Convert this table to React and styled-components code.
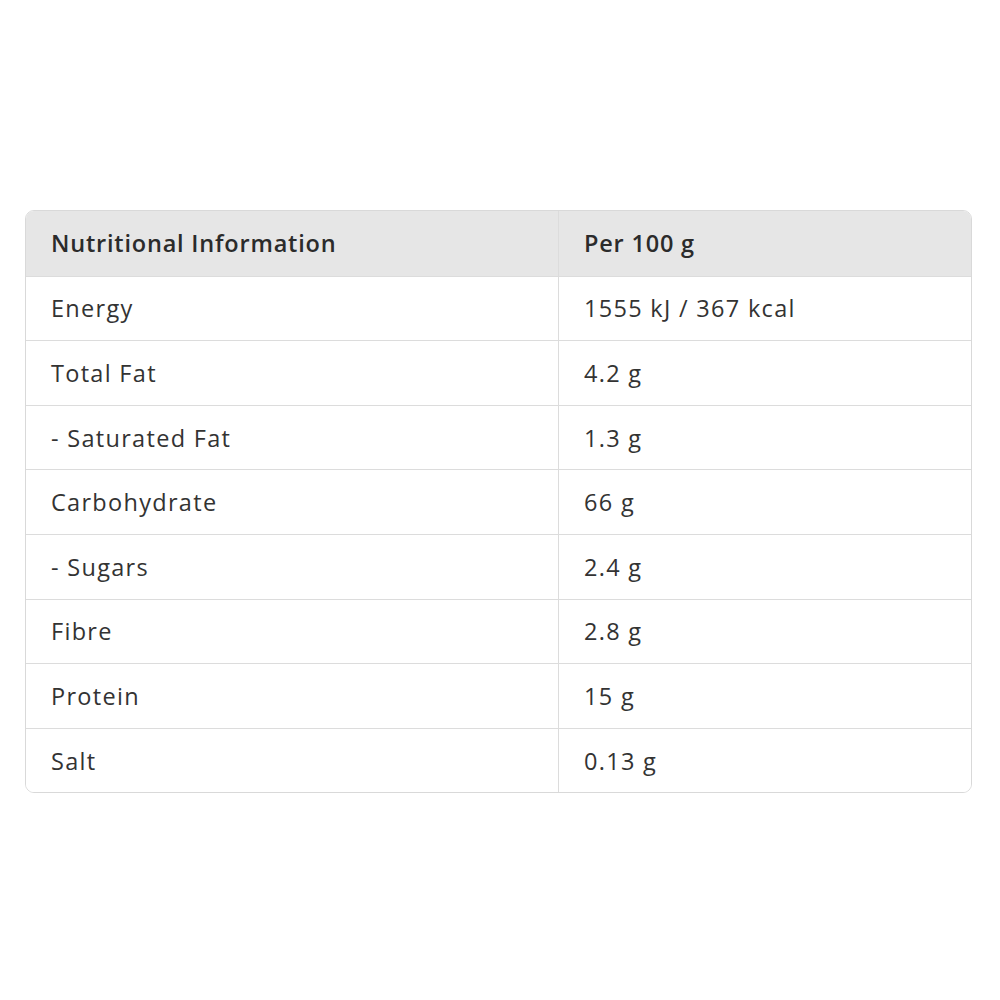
import React from "react";
import styled, { createGlobalStyle } from "styled-components";

const Global = createGlobalStyle`
  html, body { margin: 0; padding: 0; background: #ffffff; }
  body { font-family: "Open Sans", "Noto Sans", sans-serif; }
`;

const Page = styled.div`
  width: 1000px;
  height: 1000px;
  padding: 210px 28px 0 25px;
  box-sizing: border-box;
`;

const Table = styled.div`
  display: grid;
  grid-template-columns: 532px 1fr;
  border: 1.5px solid #d9d9d9;
  border-radius: 9px;
  overflow: hidden;
  color: #333333;
`;

const Cell = styled.div`
  height: 64.6px;
  box-sizing: border-box;
  display: flex;
  align-items: center;
  padding-left: 25px;
  font-size: 23.5px;
  font-weight: ${(p) => (p.$head ? 600 : 400)};
  color: ${(p) => (p.$head ? "#2b2b2b" : "#333333")};
  background: ${(p) => (p.$head ? "#e6e6e6" : "#ffffff")};
  border-top: ${(p) => (p.$first ? "none" : "1.5px solid #dcdcdc")};
  border-left: ${(p) => (p.$right ? "1.5px solid #dcdcdc" : "none")};
  letter-spacing: ${(p) => (p.$head ? "0.8px" : "1.3px")};
`;

const rows = [
  ["Energy", "1555 kJ / 367 kcal"],
  ["Total Fat", "4.2 g"],
  ["- Saturated Fat", "1.3 g"],
  ["Carbohydrate", "66 g"],
  ["- Sugars", "2.4 g"],
  ["Fibre", "2.8 g"],
  ["Protein", "15 g"],
  ["Salt", "0.13 g"],
];

export default function App() {
  return (
    <Page>
      <Global />
      <Table>
        <Cell $head $first>Nutritional Information</Cell>
        <Cell $head $first $right>Per 100 g</Cell>
        {rows.map(([k, v]) => (
          <React.Fragment key={k}>
            <Cell>{k}</Cell>
            <Cell $right>{v}</Cell>
          </React.Fragment>
        ))}
      </Table>
    </Page>
  );
}
